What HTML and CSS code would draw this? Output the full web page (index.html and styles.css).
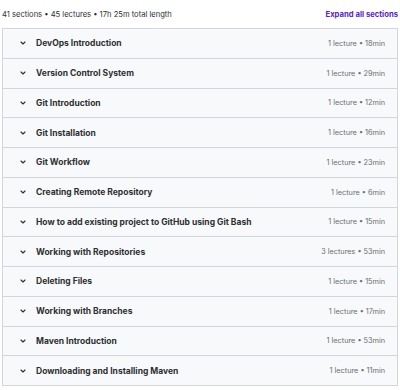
FILE: index.html
```html
<!DOCTYPE html>
<html lang="en">
<head>
  <meta charset="UTF-8" />
  <meta name="viewport" content="width=device-width, initial-scale=1.0"/>
  <title>Course content</title>
  <link rel="stylesheet" href="styles.css">
</head>
<body>
  <div class="curriculum">
    <div class="summary">
      <span>41 sections • 45 lectures • 17h 25m total length</span>
      <button class="expand">Expand all sections</button>
    </div>

    <div class="sections">
      <div class="section"><span class="chev"><svg viewBox="0 0 10 10"><path d="M3 4 L5 6 L7 4"/></svg></span><span class="title">DevOps Introduction</span><span class="meta">1 lecture • 18min</span></div>
      <div class="section"><span class="chev"><svg viewBox="0 0 10 10"><path d="M3 4 L5 6 L7 4"/></svg></span><span class="title">Version Control System</span><span class="meta">1 lecture • 29min</span></div>
      <div class="section"><span class="chev"><svg viewBox="0 0 10 10"><path d="M3 4 L5 6 L7 4"/></svg></span><span class="title">Git Introduction</span><span class="meta">1 lecture • 12min</span></div>
      <div class="section"><span class="chev"><svg viewBox="0 0 10 10"><path d="M3 4 L5 6 L7 4"/></svg></span><span class="title">Git Installation</span><span class="meta">1 lecture • 16min</span></div>
      <div class="section"><span class="chev"><svg viewBox="0 0 10 10"><path d="M3 4 L5 6 L7 4"/></svg></span><span class="title">Git Workflow</span><span class="meta">1 lecture • 23min</span></div>
      <div class="section"><span class="chev"><svg viewBox="0 0 10 10"><path d="M3 4 L5 6 L7 4"/></svg></span><span class="title">Creating Remote Repository</span><span class="meta">1 lecture • 6min</span></div>
      <div class="section"><span class="chev"><svg viewBox="0 0 10 10"><path d="M3 4 L5 6 L7 4"/></svg></span><span class="title">How to add existing project to GitHub using Git Bash</span><span class="meta">1 lecture • 15min</span></div>
      <div class="section"><span class="chev"><svg viewBox="0 0 10 10"><path d="M3 4 L5 6 L7 4"/></svg></span><span class="title">Working with Repositories</span><span class="meta">3 lectures • 53min</span></div>
      <div class="section"><span class="chev"><svg viewBox="0 0 10 10"><path d="M3 4 L5 6 L7 4"/></svg></span><span class="title">Deleting Files</span><span class="meta">1 lecture • 15min</span></div>
      <div class="section"><span class="chev"><svg viewBox="0 0 10 10"><path d="M3 4 L5 6 L7 4"/></svg></span><span class="title">Working with Branches</span><span class="meta">1 lecture • 17min</span></div>
      <div class="section"><span class="chev"><svg viewBox="0 0 10 10"><path d="M3 4 L5 6 L7 4"/></svg></span><span class="title">Maven Introduction</span><span class="meta">1 lecture • 53min</span></div>
      <div class="section"><span class="chev"><svg viewBox="0 0 10 10"><path d="M3 4 L5 6 L7 4"/></svg></span><span class="title">Downloading and Installing Maven</span><span class="meta">1 lecture • 11min</span></div>
    </div>
  </div>
</body>
</html>
```

FILE: styles.css
```css
body { margin: 0; background: #fff; font-family: Inter, "Noto Sans", sans-serif; color: #2d2f31; }
.curriculum { padding: 0 2px; }
.summary { display: flex; justify-content: space-between; align-items: center; height: 28px; font-size: 7.6px; }
.expand { border: none; background: none; padding: 0; font: inherit; font-size: 7.7px; font-weight: 700; color: #5624d0; cursor: pointer; }
.sections { border: 1px solid #d1d7dc; border-bottom: none; }
.section { display: flex; align-items: center; height: 28.75px; padding: 0 12px 0 15px; background: #f7f9fa; border-bottom: 1px solid #d1d7dc; }
.chev { width: 10px; height: 10px; margin-right: 8px; display: flex; }
.chev svg { width: 10px; height: 10px; fill: none; stroke: #2d2f31; stroke-width: 1.1; stroke-linecap: round; stroke-linejoin: round; }
.title { flex: 1; font-size: 8.5px; font-weight: 700; }
.meta { font-size: 7.3px; color: #6a6f73; }
```
